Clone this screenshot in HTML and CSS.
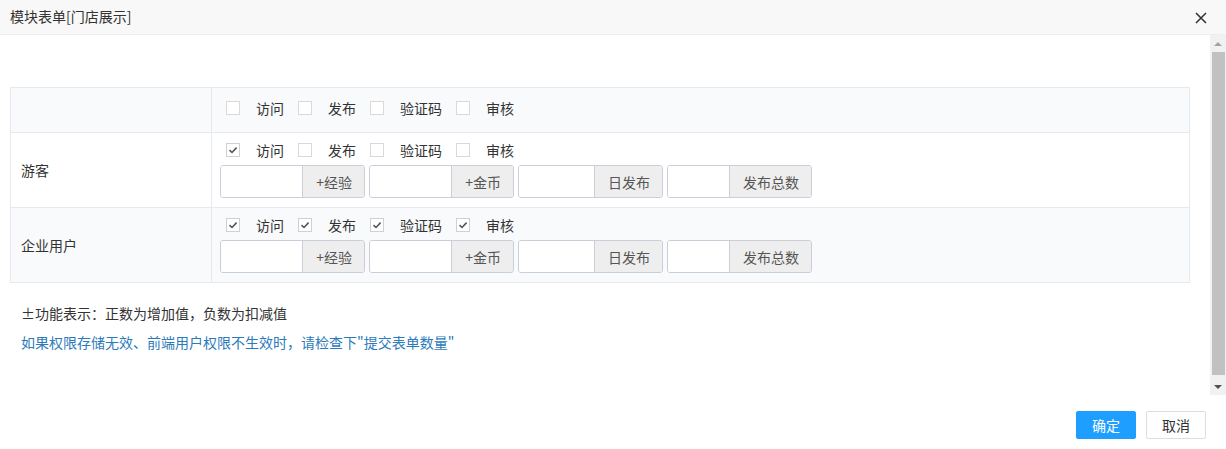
FILE: index.html
```html
<!DOCTYPE html>
<html lang="zh-CN">
<head>
  <meta charset="UTF-8">
  <title>模块表单[门店展示]</title>
  <link rel="stylesheet" href="styles.css">
</head>
<body>
  <div class="dialog">
    <div class="dialog-title">
      <span>模块表单[门店展示]</span>
      <span class="close">
        <svg width="12" height="12" viewBox="0 0 12 12"><path d="M1 1L11 11M11 1L1 11" stroke="#2f2f3a" stroke-width="1.5" fill="none"/></svg>
      </span>
    </div>

    <div class="dialog-body">
      <div class="dialog-content">
        <table class="perm-table">
          <tr class="head-row">
            <td class="role"></td>
            <td class="opts">
              <div class="checks">
                <label class="check"><span class="box"></span>访问</label>
                <label class="check"><span class="box"></span>发布</label>
                <label class="check"><span class="box"></span>验证码</label>
                <label class="check"><span class="box"></span>审核</label>
              </div>
            </td>
          </tr>
          <tr>
            <td class="role">游客</td>
            <td class="opts">
              <div class="checks">
                <label class="check"><span class="box on"><svg width="10" height="10" viewBox="0 0 10 10"><path d="M1.5 5.2L4 7.5L8.6 2.6" stroke="#555" stroke-width="1.6" fill="none"/></svg></span>访问</label>
                <label class="check"><span class="box"></span>发布</label>
                <label class="check"><span class="box"></span>验证码</label>
                <label class="check"><span class="box"></span>审核</label>
              </div>
              <div class="groups">
                <div class="group"><input type="text"><span class="addon">+经验</span></div>
                <div class="group"><input type="text"><span class="addon">+金币</span></div>
                <div class="group"><input type="text"><span class="addon">日发布</span></div>
                <div class="group"><input type="text"><span class="addon">发布总数</span></div>
              </div>
            </td>
          </tr>
          <tr class="alt">
            <td class="role">企业用户</td>
            <td class="opts">
              <div class="checks">
                <label class="check"><span class="box on"><svg width="10" height="10" viewBox="0 0 10 10"><path d="M1.5 5.2L4 7.5L8.6 2.6" stroke="#555" stroke-width="1.6" fill="none"/></svg></span>访问</label>
                <label class="check"><span class="box on"><svg width="10" height="10" viewBox="0 0 10 10"><path d="M1.5 5.2L4 7.5L8.6 2.6" stroke="#555" stroke-width="1.6" fill="none"/></svg></span>发布</label>
                <label class="check"><span class="box on"><svg width="10" height="10" viewBox="0 0 10 10"><path d="M1.5 5.2L4 7.5L8.6 2.6" stroke="#555" stroke-width="1.6" fill="none"/></svg></span>验证码</label>
                <label class="check"><span class="box on"><svg width="10" height="10" viewBox="0 0 10 10"><path d="M1.5 5.2L4 7.5L8.6 2.6" stroke="#555" stroke-width="1.6" fill="none"/></svg></span>审核</label>
              </div>
              <div class="groups">
                <div class="group"><input type="text"><span class="addon">+经验</span></div>
                <div class="group"><input type="text"><span class="addon">+金币</span></div>
                <div class="group"><input type="text"><span class="addon">日发布</span></div>
                <div class="group"><input type="text"><span class="addon">发布总数</span></div>
              </div>
            </td>
          </tr>
        </table>

        <p class="note">±功能表示：正数为增加值，负数为扣减值</p>
        <p class="tip">如果权限存储无效、前端用户权限不生效时，请检查下"提交表单数量"</p>
      </div>

      <div class="scrollbar">
        <span class="arrow up"></span>
        <span class="thumb"></span>
        <span class="arrow down"></span>
      </div>
    </div>

    <div class="dialog-btns">
      <button class="btn btn-primary">确定</button>
      <button class="btn">取消</button>
    </div>
  </div>
</body>
</html>
```

FILE: styles.css
```css
body {
  margin: 0;
  font-family: "Noto Sans CJK SC", "Liberation Sans", sans-serif;
  font-size: 14px;
  color: #333;
  background: #fff;
}
.dialog {
  width: 1226px;
  height: 449px;
}
.dialog-title {
  display: flex;
  justify-content: space-between;
  align-items: center;
  height: 35px;
  padding: 0 19px 2px 10px;
  box-sizing: border-box;
  background-color: #f8f8f8;
  border-bottom: 1px solid #eee;
}
.close {
  display: flex;
  margin-top: 3px;
}
.dialog-body {
  display: flex;
  height: 360px;
}
.dialog-content {
  flex: 1;
  overflow: hidden;
  padding: 52px 0 0 10px;
}
.scrollbar {
  display: flex;
  flex-direction: column;
  width: 16px;
  background: #f1f1f1;
}
.arrow {
  height: 17px;
  display: flex;
  align-items: center;
  justify-content: center;
}
.arrow::after {
  content: "";
  width: 0;
  height: 0;
  border-left: 4px solid transparent;
  border-right: 4px solid transparent;
}
.up::after {
  border-bottom: 4px solid #a3a3a3;
}
.down::after {
  border-top: 4px solid #505050;
}
.thumb {
  flex: 1;
  margin: 0 1px 3px 2px;
  background: #c1c1c1;
}
.perm-table {
  width: 1180px;
  border-collapse: collapse;
}
.perm-table td {
  border: 1px solid #e6e9ed;
  vertical-align: middle;
}
.head-row,
.alt {
  background-color: #f9fafc;
}
.role {
  width: 180px;
  padding: 0 10px;
}
.opts {
  padding: 7px 8px 9px 8px;
}
.head-row .opts {
  padding: 10px 8px 14px;
}
.checks {
  display: flex;
  height: 20px;
  align-items: center;
}
.check {
  display: flex;
  align-items: center;
  margin-right: 8px;
}
.box {
  box-sizing: border-box;
  width: 14px;
  height: 14px;
  margin: 0 16px 0 6px;
  border: 1px solid #d9d9d9;
  background: #fff;
  display: flex;
  align-items: center;
  justify-content: center;
}
.box.on {
  border-color: #d0d0d0;
}
.groups {
  display: flex;
  gap: 4px;
  margin-top: 5px;
}
.group {
  display: flex;
  width: 145px;
  height: 33px;
  box-sizing: border-box;
  border: 1px solid #c9ced8;
  border-radius: 3px;
  overflow: hidden;
}
.group input {
  flex: 1;
  min-width: 0;
  border: 0;
  border-right: 1px solid #c9ced8;
  padding: 0 6px;
  font: inherit;
  outline: none;
}
.addon {
  display: flex;
  align-items: center;
  padding: 0 12px 0 13px;
  background-color: #eee;
  color: #555;
}
.note {
  margin: 20px 0 0 11px;
  line-height: 20px;
}
.tip {
  margin: 9px 0 0 11px;
  line-height: 20px;
  color: #2b7bba;
}
.dialog-btns {
  display: flex;
  justify-content: flex-end;
  gap: 10px;
  padding: 16px 20px 0 0;
}
.btn {
  width: 60px;
  height: 28px;
  border: 1px solid #dedede;
  border-radius: 2px;
  background: #fff;
  color: #333;
  font: inherit;
  font-size: 14px;
  padding: 0;
}
.btn-primary {
  background-color: #1e9fff;
  border-color: #1e9fff;
  color: #fff;
}
```
